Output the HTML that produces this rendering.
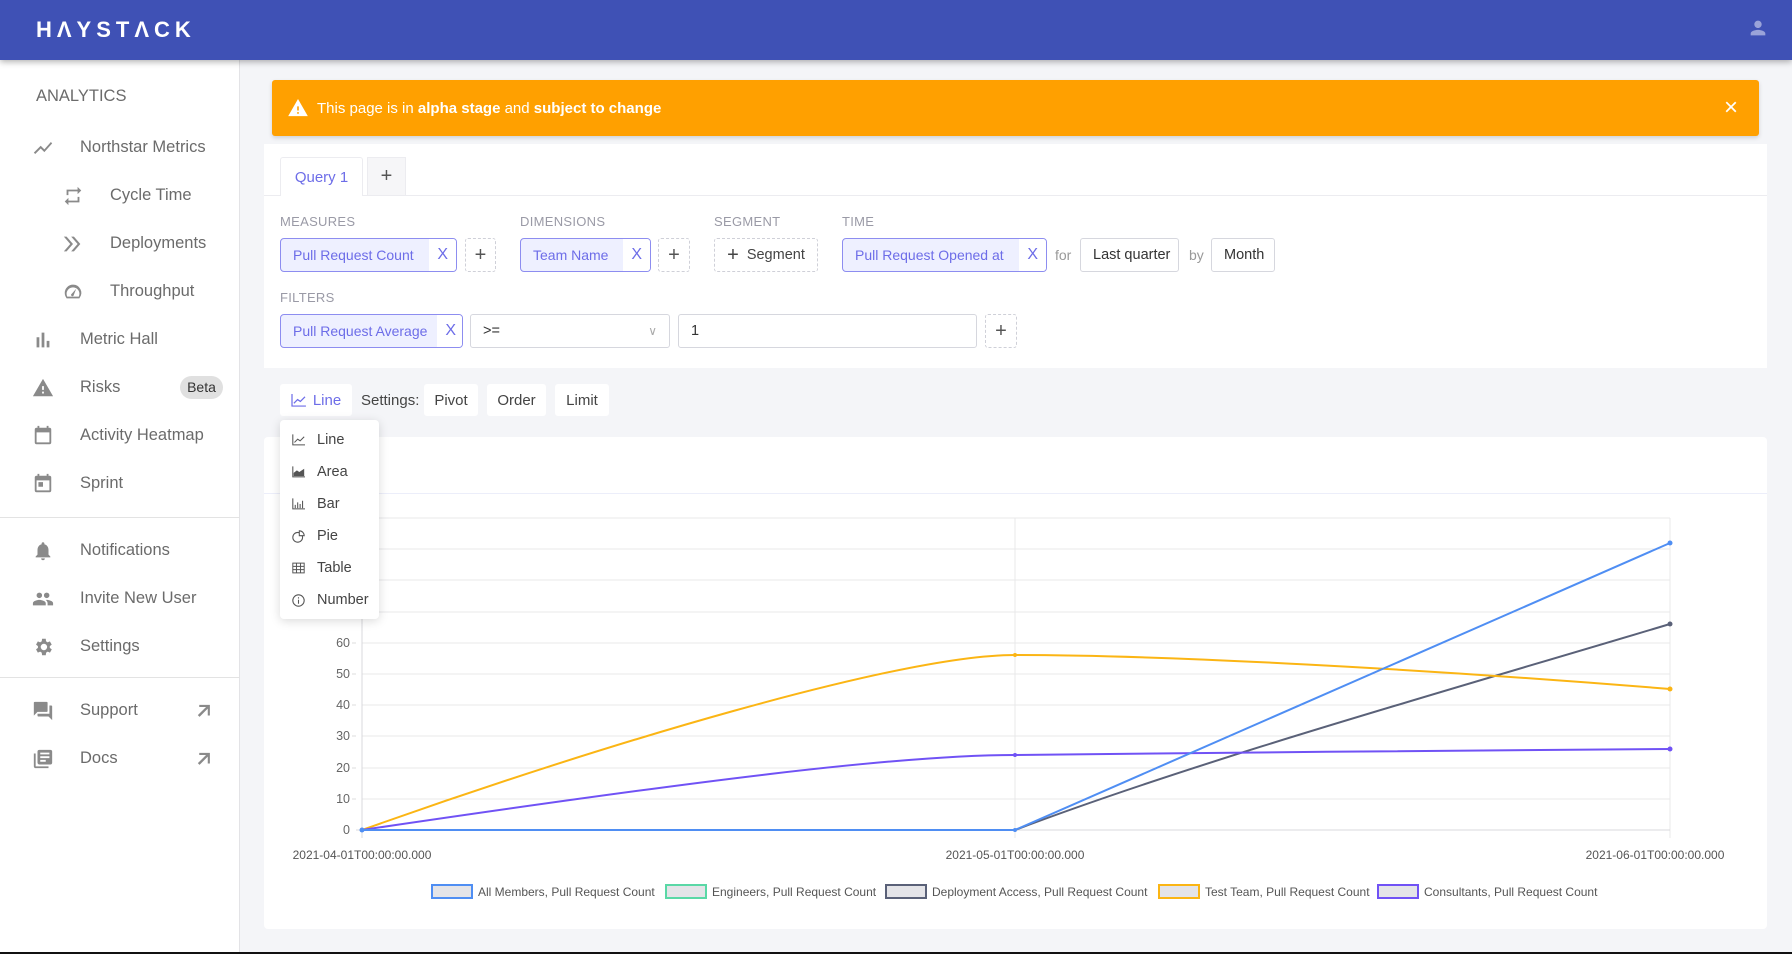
<!DOCTYPE html>
<html><head><meta charset="utf-8"><style>
*{box-sizing:border-box;margin:0;padding:0}
body{width:1792px;height:954px;overflow:hidden;background:#f4f5f8;font-family:"Liberation Sans",sans-serif;position:relative}
.a{position:absolute;white-space:nowrap}
.hdr{left:0;top:0;width:1792px;height:60px;background:#3f51b5;box-shadow:0 2px 6px rgba(0,0,0,.3);z-index:5}
.logo{left:36px;top:17px;color:#fff;font-weight:bold;font-size:22px;letter-spacing:5px}
.side{left:0;top:60px;width:240px;height:894px;background:#fff;border-right:1px solid #e3e3e6}
.nav{font-size:16.5px;color:#6b6b6b}
.ic{position:absolute;fill:#8a8a8a}
.div{left:0;width:240px;height:1px;background:#e3e3e3}
.alert{left:272px;top:80px;width:1487px;height:56px;background:#ffa000;border-radius:3px;box-shadow:0 2px 4px rgba(0,0,0,.15);color:#fff;font-size:15px}
.card{background:#fff}
.lbl{font-size:13px;color:#9a9aa6;letter-spacing:.3px}
.chip{height:34px;border:1px solid #8d8df0;border-radius:4px;background:#eef0ff;color:#6d6de8;font-size:14px;display:flex;align-items:center;overflow:hidden;white-space:nowrap}
.chip span{padding:0 10px 0 12px;flex:1}
.chip b{font-weight:normal;background:#fff;height:100%;display:flex;align-items:center;padding:0 8px;color:#6d6de8;font-size:16px}
.dash{height:34px;border:1px dashed #cfd0d8;border-radius:3px;display:flex;align-items:center;justify-content:center;color:#555;font-size:20px;white-space:nowrap}
.box{height:34px;border:1px solid #d6d7de;border-radius:3px;display:flex;align-items:center;padding:0 12px;color:#333;font-size:14.5px;background:#fff;white-space:nowrap}
.btn{height:32px;background:#fff;border-radius:3px;display:flex;align-items:center;justify-content:center;font-size:15px;color:#444}
.dd{left:280px;top:420px;width:99px;height:199px;background:#fff;border-radius:4px;box-shadow:0 2px 10px rgba(0,0,0,.15);z-index:4}
.dd div{position:absolute;left:0;font-size:14.5px;color:#444;display:flex;align-items:center}
.dd svg{margin-left:12px;margin-right:12px}
</style></head><body>
<div class="a hdr"><div class="a logo">HΛYSTΛCK</div>
<svg class="a" style="left:1747px;top:17px" width="22" height="22" viewBox="0 0 24 24"><path fill="#9aa3d9" d="M12 12c2.2 0 4-1.8 4-4s-1.8-4-4-4-4 1.8-4 4 1.8 4 4 4zm0 2c-2.7 0-8 1.3-8 4v2h16v-2c0-2.7-5.3-4-8-4z"/></svg></div>
<div class="a side">
<div class="a nav" style="left:36px;top:27px;color:#6b6b6b">ANALYTICS</div>
<svg class="ic" style="left:32px;top:77px" width="22" height="22" viewBox="0 0 24 24"><path d="M3.5 18.5l6-6 4 4L22 6.9 20.6 5.5l-7.1 8-4-4L2 17z"/></svg>
<div class="a nav" style="left:80px;top:78px">Northstar Metrics</div>
<svg class="ic" style="left:62px;top:125px" width="22" height="22" viewBox="0 0 24 24"><path d="M7 7h10v3l4-4-4-4v3H5v6h2zm10 10H7v-3l-4 4 4 4v-3h12v-6h-2z"/></svg>
<div class="a nav" style="left:110px;top:126px">Cycle Time</div>
<svg class="ic" style="left:62px;top:173px" width="22" height="22" viewBox="0 0 24 24"><path d="M5 4l7 8-7 8H2l7-8-7-8zm8 0l7 8-7 8h-3l7-8-7-8z"/></svg>
<div class="a nav" style="left:110px;top:174px">Deployments</div>
<svg class="ic" style="left:62px;top:221px" width="22" height="22" viewBox="0 0 24 24"><path d="M12 4a9 9 0 00-9 9c0 2 .6 3.8 1.7 5.3l.3.7h14l.3-.7A9 9 0 0012 4zm6.3 13H5.7A7 7 0 1118.3 17zM15.5 8.5l-4.7 5.3a1.5 1.5 0 102.1 1.4z"/></svg>
<div class="a nav" style="left:110px;top:222px">Throughput</div>
<svg class="ic" style="left:32px;top:269px" width="22" height="22" viewBox="0 0 24 24"><path d="M5 9h3v11H5zm5.5-5h3v16h-3zM16 13h3v7h-3z"/></svg>
<div class="a nav" style="left:80px;top:270px">Metric Hall</div>
<svg class="ic" style="left:32px;top:317px" width="22" height="22" viewBox="0 0 24 24"><path d="M1 21h22L12 2zm12-3h-2v-2h2zm0-4h-2v-4h2z"/></svg>
<div class="a nav" style="left:80px;top:318px">Risks</div>
<div class="a" style="left:180px;top:316px;width:43px;height:23px;border-radius:12px;background:#e0e0e0;font-size:14px;color:#333;text-align:center;line-height:23px">Beta</div>
<svg class="ic" style="left:32px;top:365px" width="22" height="22" viewBox="0 0 24 24"><path d="M19 3h-1V1h-2v2H8V1H6v2H5a2 2 0 00-2 2v14a2 2 0 002 2h14a2 2 0 002-2V5a2 2 0 00-2-2zm0 16H5V8h14z"/></svg>
<div class="a nav" style="left:80px;top:366px">Activity Heatmap</div>
<svg class="ic" style="left:32px;top:413px" width="22" height="22" viewBox="0 0 24 24"><path d="M19 3h-1V1h-2v2H8V1H6v2H5a2 2 0 00-2 2v14a2 2 0 002 2h14a2 2 0 002-2V5a2 2 0 00-2-2zm0 16H5V8h14zM7 10h5v5H7z"/></svg>
<div class="a nav" style="left:80px;top:414px">Sprint</div>
<div class="a div" style="top:457px"></div>
<svg class="ic" style="left:32px;top:480px" width="22" height="22" viewBox="0 0 24 24"><path d="M12 22a2 2 0 002-2h-4a2 2 0 002 2zm6-6v-5c0-3.1-1.6-5.6-4.5-6.3V4a1.5 1.5 0 00-3 0v.7C7.6 5.4 6 7.9 6 11v5l-2 2v1h16v-1z"/></svg>
<div class="a nav" style="left:80px;top:481px">Notifications</div>
<svg class="ic" style="left:32px;top:528px" width="22" height="22" viewBox="0 0 24 24"><path d="M16 11a3 3 0 100-6 3 3 0 000 6zm-8 0a3 3 0 100-6 3 3 0 000 6zm0 2c-2.3 0-7 1.2-7 3.5V19h14v-2.5C15 14.2 10.3 13 8 13zm8 0c-.3 0-.6 0-1 .1 1.2.8 2 2 2 3.4V19h6v-2.5c0-2.3-4.7-3.5-7-3.5z"/></svg>
<div class="a nav" style="left:80px;top:529px">Invite New User</div>
<svg class="ic" style="left:32px;top:576px" width="22" height="22" viewBox="0 0 24 24"><path d="M19.4 13a7.5 7.5 0 000-2l2.1-1.6-2-3.5-2.5 1a7 7 0 00-1.7-1L15 3h-4l-.4 2.9a7 7 0 00-1.7 1l-2.5-1-2 3.5L6.5 11a7.5 7.5 0 000 2l-2.1 1.6 2 3.5 2.5-1a7 7 0 001.7 1L11 21h4l.4-2.9a7 7 0 001.7-1l2.5 1 2-3.5zM13 15.5a3.5 3.5 0 110-7 3.5 3.5 0 010 7z"/></svg>
<div class="a nav" style="left:80px;top:577px">Settings</div>
<div class="a div" style="top:617px"></div>
<svg class="ic" style="left:32px;top:640px" width="22" height="22" viewBox="0 0 24 24"><path d="M21 6h-2v9H6v2c0 .6.4 1 1 1h11l4 4V7c0-.6-.4-1-1-1zm-4 6V3c0-.6-.4-1-1-1H3c-.6 0-1 .4-1 1v14l4-4h10c.6 0 1-.4 1-1z"/></svg>
<div class="a nav" style="left:80px;top:641px">Support</div>
<svg class="ic" style="left:195px;top:642px" width="17" height="17" viewBox="0 0 24 24"><path d="M6 4v3h9.6L4 18.6 6.4 21 18 9.4V19h3V4z"/></svg>
<svg class="ic" style="left:32px;top:688px" width="22" height="22" viewBox="0 0 24 24"><path d="M4 6H2v14c0 1.1.9 2 2 2h14v-2H4zm16-4H8a2 2 0 00-2 2v12c0 1.1.9 2 2 2h12a2 2 0 002-2V4a2 2 0 00-2-2zm-1 9h-10V9h10zm-4 4H9v-2h6zm4-8H9V5h10z"/></svg>
<div class="a nav" style="left:80px;top:689px">Docs</div>
<svg class="ic" style="left:195px;top:690px" width="17" height="17" viewBox="0 0 24 24"><path d="M6 4v3h9.6L4 18.6 6.4 21 18 9.4V19h3V4z"/></svg>
</div>

<div class="a alert">
<svg class="a" style="left:16px;top:19px" width="20" height="18" viewBox="0 0 24 22"><path fill="#fff" d="M0 21h24L12 0zm13-3h-2v-2h2zm0-4h-2V9h2z"/></svg>
<div class="a" style="left:45px;top:20px">This page is in <b>alpha stage</b> and <b>subject to change</b></div>
<div class="a" style="left:1452px;top:14px;font-size:24px">×</div>
</div>

<div class="a card" style="left:264px;top:144px;width:1503px;height:224px">
<div class="a" style="left:0;top:51px;width:1503px;height:1px;background:#ececf0"></div>
<div class="a" style="left:16px;top:13px;width:83px;height:39px;background:#fff;border:1px solid #ececf0;border-bottom:none;border-radius:3px 3px 0 0;color:#6d6de8;font-size:15px;text-align:center;line-height:39px">Query 1</div>
<div class="a" style="left:103px;top:13px;width:39px;height:38px;background:#f6f6f8;border:1px solid #ececf0;border-bottom:none;color:#555;font-size:20px;text-align:center;line-height:36px">+</div>
<div class="a lbl" style="left:16px;top:70px">MEASURES</div>
<div class="a lbl" style="left:256px;top:70px">DIMENSIONS</div>
<div class="a lbl" style="left:450px;top:70px">SEGMENT</div>
<div class="a lbl" style="left:578px;top:70px">TIME</div>
<div class="a chip" style="left:16px;top:94px;width:177px"><span>Pull Request Count</span><b>X</b></div>
<div class="a dash" style="left:201px;top:94px;width:31px">+</div>
<div class="a chip" style="left:256px;top:94px;width:131px"><span>Team Name</span><b>X</b></div>
<div class="a dash" style="left:394px;top:94px;width:32px">+</div>
<div class="a dash" style="left:450px;top:94px;width:104px;font-size:14.5px;color:#444"><span style="font-size:20px;margin-right:8px">+</span>Segment</div>
<div class="a chip" style="left:578px;top:94px;width:205px"><span>Pull Request Opened at</span><b>X</b></div>
<div class="a" style="left:791px;top:103px;color:#999;font-size:14px">for</div>
<div class="a box" style="left:816px;top:94px;width:99px">Last quarter</div>
<div class="a" style="left:925px;top:103px;color:#999;font-size:14px">by</div>
<div class="a box" style="left:947px;top:94px;width:64px">Month</div>
<div class="a lbl" style="left:16px;top:146px">FILTERS</div>
<div class="a chip" style="left:16px;top:170px;width:183px"><span>Pull Request Average</span><b>X</b></div>
<div class="a box" style="left:206px;top:170px;width:200px">&gt;=<span style="position:absolute;right:12px;color:#aaa;font-size:12px">∨</span></div>
<div class="a box" style="left:414px;top:170px;width:299px">1</div>
<div class="a dash" style="left:721px;top:170px;width:32px">+</div>
</div>

<div class="a btn" style="left:280px;top:384px;width:72px;color:#6d6de8">
<svg width="15" height="13" viewBox="0 0 16 14" style="margin-right:7px"><path d="M1 0v13h15" stroke="#6d6de8" fill="none" stroke-width="1.3"/><path d="M3 10l4-4 3 2 5-5" stroke="#6d6de8" fill="none" stroke-width="1.3"/></svg>Line</div>
<div class="a" style="left:361px;top:392px;font-size:15px;color:#444">Settings:</div>
<div class="a btn" style="left:424px;top:384px;width:54px">Pivot</div>
<div class="a btn" style="left:487px;top:384px;width:59px">Order</div>
<div class="a btn" style="left:555px;top:384px;width:54px">Limit</div>

<div class="a card" style="left:264px;top:437px;width:1503px;height:492px;border-radius:4px">
<div class="a" style="left:0;top:56px;width:1503px;height:1px;background:#eceefa"></div>
</div>

<div class="a dd">
<div style="top:12px"><svg width="13" height="12" viewBox="0 0 16 14"><path d="M1 0v13h15" stroke="#555" fill="none" stroke-width="1.3"/><path d="M3 10l4-4 3 2 5-5" stroke="#555" fill="none" stroke-width="1.3"/></svg>Line</div>
<div style="top:44px"><svg width="13" height="12" viewBox="0 0 16 14"><path d="M1 0v13h15" stroke="#555" fill="none" stroke-width="1.3"/><path d="M2 12V8l4-3 3 2 6-4v9z" fill="#555"/></svg>Area</div>
<div style="top:76px"><svg width="13" height="12" viewBox="0 0 16 14"><path d="M1 0v13h15M4 12V8M7 12V5M10 12V7M13 12V3" stroke="#555" fill="none" stroke-width="1.3"/></svg>Bar</div>
<div style="top:108px"><svg width="13" height="13" viewBox="0 0 16 16"><circle cx="7" cy="9" r="6" stroke="#555" fill="none" stroke-width="1.3"/><path d="M9 1v6h6A6 6 0 009 1z" stroke="#555" fill="#fff" stroke-width="1.3"/></svg>Pie</div>
<div style="top:140px"><svg width="13" height="12" viewBox="0 0 16 14"><path d="M1 1h14v12H1zM1 5h14M1 9h14M5.5 1v12M10.5 1v12" stroke="#555" fill="none" stroke-width="1.2"/></svg>Table</div>
<div style="top:172px"><svg width="13" height="13" viewBox="0 0 16 16"><circle cx="8" cy="8" r="7" stroke="#555" fill="none" stroke-width="1.3"/><path d="M8 7v5M8 4v1.5" stroke="#555" stroke-width="1.3"/></svg>Number</div>
</div>

<svg class="a" style="left:264px;top:500px" width="1503" height="420" viewBox="264 500 1503 420" font-family="Liberation Sans, sans-serif">
<g stroke="#e8e8ea" stroke-width="1">
<path d="M362 518H1670M362 549H1670M362 580H1670M362 612H1670M362 643H1670M362 674H1670M362 705H1670M362 736H1670M362 768H1670M362 799H1670"/>
<path d="M1015 518V838M1670 518V838"/>
</g>
<path d="M356 830H1670M362 518V838" stroke="#d8d8dc" stroke-width="1"/>
<path d="M352 643H356M352 674H356M352 705H356M352 736H356M352 768H356M352 799H356" stroke="#ddd"/>
<g font-size="12.5" fill="#666" text-anchor="end">
<text x="350" y="647">60</text><text x="350" y="678">50</text><text x="350" y="709">40</text><text x="350" y="740">30</text><text x="350" y="772">20</text><text x="350" y="803">10</text><text x="350" y="834">0</text></g>
<g font-size="12" fill="#555" text-anchor="middle">
<text x="362" y="859">2021-04-01T00:00:00.000</text><text x="1015" y="859">2021-05-01T00:00:00.000</text><text x="1655" y="859">2021-06-01T00:00:00.000</text></g>
<g fill="none" stroke-width="2">
<path d="M362 830H1015C1200 760 1450 690 1670 624" stroke="#5a6178"/>
<path d="M362 830C600 745 900 655 1015 655C1200 655 1500 675 1670 689" stroke="#fbb514"/>
<path d="M362 830C700 780 900 755 1015 755C1200 752 1500 751 1670 749" stroke="#7052f5"/>
<path d="M362 830H1015L1670 543" stroke="#4f8ef3"/>
</g>
<g><circle cx="1670" cy="543" r="2.5" fill="#4f8ef3"/><circle cx="1670" cy="624" r="2.5" fill="#5a6178"/><circle cx="1670" cy="689" r="2.5" fill="#fbb514"/><circle cx="1670" cy="749" r="2.5" fill="#7052f5"/><circle cx="1015" cy="655" r="2" fill="#fbb514"/><circle cx="1015" cy="755" r="2" fill="#7052f5"/><circle cx="1015" cy="830" r="2" fill="#4f8ef3"/><circle cx="362" cy="830" r="2.5" fill="#4f8ef3"/></g>
<g font-size="12" fill="#555">
<rect x="432" y="885" width="40" height="13" fill="#e4e4e8" stroke="#4f8ef3" stroke-width="2"/><text x="478" y="896">All Members, Pull Request Count</text>
<rect x="666" y="885" width="40" height="13" fill="#e4e4e8" stroke="#5ad8a6" stroke-width="2"/><text x="712" y="896">Engineers, Pull Request Count</text>
<rect x="886" y="885" width="40" height="13" fill="#e4e4e8" stroke="#5a6178" stroke-width="2"/><text x="932" y="896">Deployment Access, Pull Request Count</text>
<rect x="1159" y="885" width="40" height="13" fill="#e4e4e8" stroke="#fbb514" stroke-width="2"/><text x="1205" y="896">Test Team, Pull Request Count</text>
<rect x="1378" y="885" width="40" height="13" fill="#e4e4e8" stroke="#7052f5" stroke-width="2"/><text x="1424" y="896">Consultants, Pull Request Count</text>
</g>
</svg>
<div class="a" style="left:0;top:952px;width:1792px;height:2px;background:#111"></div>
</body></html>
